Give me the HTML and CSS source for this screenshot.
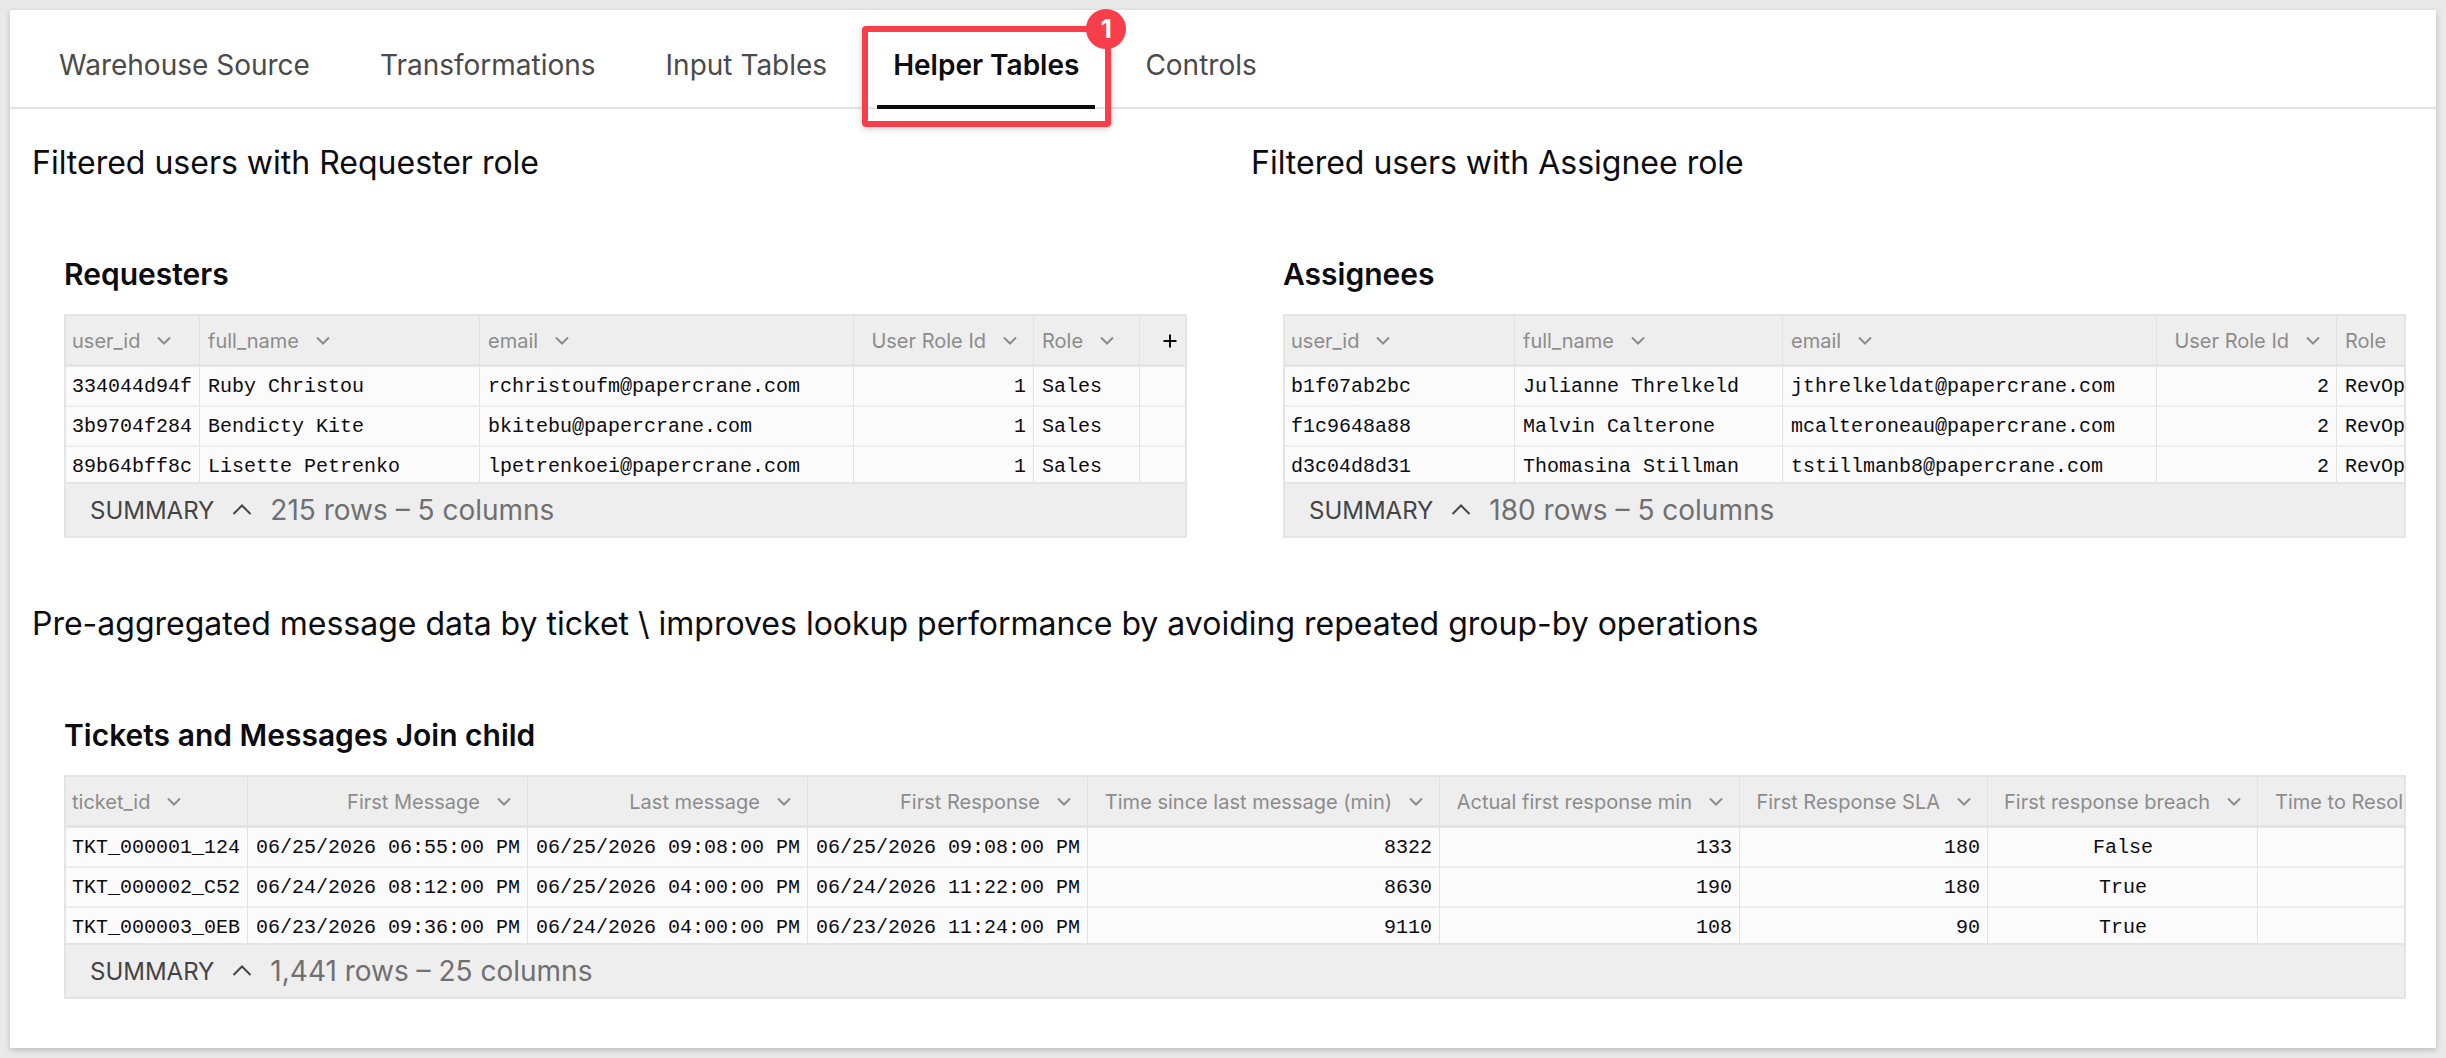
FILE: index.html
```html
<!DOCTYPE html>
<html lang="en">
<head>
    <meta charset="UTF-8">
    <meta name="viewport" content="width=device-width, initial-scale=1.0">
    <title>Helper Tables</title>
    <link rel="stylesheet" href="styles.css">
</head>
<body>
    <svg class="sprite" aria-hidden="true">
        <symbol id="chevron-down" viewBox="0 0 24 24">
            <path d="M6 8.5 L12 14.5 L18 8.5"/>
        </symbol>
        <symbol id="chevron-up" viewBox="0 0 24 24">
            <path d="M3.5 16 L12 7.5 L20.5 16"/>
        </symbol>
        <symbol id="plus" viewBox="0 0 24 24">
            <path d="M12 5.5 V18.5 M5.5 12 H18.5"/>
        </symbol>
    </svg>

    <main class="card">
        <nav class="tabs">
            <button type="button" class="tab">Warehouse Source</button>
            <button type="button" class="tab">Transformations</button>
            <button type="button" class="tab">Input Tables</button>
            <button type="button" class="tab active">Helper Tables<span class="callout"><span class="badge">1</span></span></button>
            <button type="button" class="tab">Controls</button>
        </nav>

        <div class="board">
            <section>
                <h2>Filtered users with Requester role</h2>
                <div class="widget">
                    <h3>Requesters</h3>
                    <div class="grid">
                        <div class="viewport">
                            <table>
                                <colgroup>
                                    <col class="w-id"><col class="w-date"><col class="w-email"><col class="w-role-id"><col class="w-role"><col>
                                </colgroup>
                                <thead>
                                    <tr>
                                        <th><button type="button">user_id<svg><use href="#chevron-down"/></svg></button></th>
                                        <th><button type="button">full_name<svg><use href="#chevron-down"/></svg></button></th>
                                        <th><button type="button">email<svg><use href="#chevron-down"/></svg></button></th>
                                        <th class="num"><button type="button">User Role Id<svg><use href="#chevron-down"/></svg></button></th>
                                        <th><button type="button">Role<svg><use href="#chevron-down"/></svg></button></th>
                                        <th class="add"><button type="button" aria-label="Add column"><svg><use href="#plus"/></svg></button></th>
                                    </tr>
                                </thead>
                                <tbody>
                                    <tr><td>334044d94f</td><td>Ruby Christou</td><td>rchristoufm@papercrane.com</td><td class="num">1</td><td>Sales</td><td></td></tr>
                                    <tr><td>3b9704f284</td><td>Bendicty Kite</td><td>bkitebu@papercrane.com</td><td class="num">1</td><td>Sales</td><td></td></tr>
                                    <tr><td>89b64bff8c</td><td>Lisette Petrenko</td><td>lpetrenkoei@papercrane.com</td><td class="num">1</td><td>Sales</td><td></td></tr>
                                </tbody>
                            </table>
                        </div>
                        <div class="footer">
                            <button type="button" class="summary">SUMMARY<svg><use href="#chevron-up"/></svg></button>
                            <span>215 rows – 5 columns</span>
                        </div>
                    </div>
                </div>
            </section>

            <section>
                <h2>Filtered users with Assignee role</h2>
                <div class="widget">
                    <h3>Assignees</h3>
                    <div class="grid">
                        <div class="viewport">
                            <table>
                                <colgroup>
                                    <col class="w-id-wide"><col class="w-name"><col class="w-email"><col class="w-role-id"><col class="w-role">
                                </colgroup>
                                <thead>
                                    <tr>
                                        <th><button type="button">user_id<svg><use href="#chevron-down"/></svg></button></th>
                                        <th><button type="button">full_name<svg><use href="#chevron-down"/></svg></button></th>
                                        <th><button type="button">email<svg><use href="#chevron-down"/></svg></button></th>
                                        <th class="num"><button type="button">User Role Id<svg><use href="#chevron-down"/></svg></button></th>
                                        <th><button type="button">Role</button></th>
                                    </tr>
                                </thead>
                                <tbody>
                                    <tr><td>b1f07ab2bc</td><td>Julianne Threlkeld</td><td>jthrelkeldat@papercrane.com</td><td class="num">2</td><td>RevOp</td></tr>
                                    <tr><td>f1c9648a88</td><td>Malvin Calterone</td><td>mcalteroneau@papercrane.com</td><td class="num">2</td><td>RevOp</td></tr>
                                    <tr><td>d3c04d8d31</td><td>Thomasina Stillman</td><td>tstillmanb8@papercrane.com</td><td class="num">2</td><td>RevOp</td></tr>
                                </tbody>
                            </table>
                        </div>
                        <div class="footer">
                            <button type="button" class="summary">SUMMARY<svg><use href="#chevron-up"/></svg></button>
                            <span>180 rows – 5 columns</span>
                        </div>
                    </div>
                </div>
            </section>

            <section class="full">
                <h2>Pre-aggregated message data by ticket \ improves lookup performance by avoiding repeated group-by operations</h2>
                <div class="widget">
                    <h3>Tickets and Messages Join child</h3>
                    <div class="grid">
                        <div class="viewport">
                            <table>
                                <colgroup>
                                    <col class="w-ticket"><col class="w-date"><col class="w-date"><col class="w-date"><col class="w-since"><col class="w-actual"><col class="w-sla"><col class="w-breach"><col class="w-actual">
                                </colgroup>
                                <thead>
                                    <tr>
                                        <th><button type="button">ticket_id<svg><use href="#chevron-down"/></svg></button></th>
                                        <th class="num"><button type="button">First Message<svg><use href="#chevron-down"/></svg></button></th>
                                        <th class="num"><button type="button">Last message<svg><use href="#chevron-down"/></svg></button></th>
                                        <th class="num"><button type="button">First Response<svg><use href="#chevron-down"/></svg></button></th>
                                        <th class="num"><button type="button">Time since last message (min)<svg><use href="#chevron-down"/></svg></button></th>
                                        <th class="num"><button type="button">Actual first response min<svg><use href="#chevron-down"/></svg></button></th>
                                        <th class="num"><button type="button">First Response SLA<svg><use href="#chevron-down"/></svg></button></th>
                                        <th class="num"><button type="button">First response breach<svg><use href="#chevron-down"/></svg></button></th>
                                        <th class="cut"><button type="button">Time to Resol</button></th>
                                    </tr>
                                </thead>
                                <tbody>
                                    <tr><td>TKT_000001_124</td><td>06/25/2026 06:55:00 PM</td><td>06/25/2026 09:08:00 PM</td><td>06/25/2026 09:08:00 PM</td><td class="num">8322</td><td class="num">133</td><td class="num">180</td><td class="flag">False</td><td></td></tr>
                                    <tr><td>TKT_000002_C52</td><td>06/24/2026 08:12:00 PM</td><td>06/25/2026 04:00:00 PM</td><td>06/24/2026 11:22:00 PM</td><td class="num">8630</td><td class="num">190</td><td class="num">180</td><td class="flag">True</td><td></td></tr>
                                    <tr><td>TKT_000003_0EB</td><td>06/23/2026 09:36:00 PM</td><td>06/24/2026 04:00:00 PM</td><td>06/23/2026 11:24:00 PM</td><td class="num">9110</td><td class="num">108</td><td class="num">90</td><td class="flag">True</td><td></td></tr>
                                </tbody>
                            </table>
                        </div>
                        <div class="footer">
                            <button type="button" class="summary">SUMMARY<svg><use href="#chevron-up"/></svg></button>
                            <span>1,441 rows – 25 columns</span>
                        </div>
                    </div>
                </div>
            </section>
        </div>
    </main>
</body>
</html>
```
FILE: styles.css
```css
* {
    box-sizing: border-box;
}
body {
    margin: 0;
    padding: 10px;
    background-color: #e9e9e9;
    color: #0c0c10;
    font-family: Inter, sans-serif;
}
button {
    padding: 0;
    border: none;
    background: none;
    color: inherit;
    font: inherit;
    cursor: pointer;
}
svg {
    width: 24px;
    height: 24px;
    flex: none;
    fill: none;
    stroke: currentColor;
    stroke-width: 2;
}
.sprite {
    display: none;
}
.card {
    background: white;
    padding-bottom: 49px;
    box-shadow: 0 2px 6px rgba(0, 0, 0, 0.2);
}

/* Tabs */
.tabs {
    display: flex;
    gap: 38px;
    height: 99px;
    padding: 0 33px;
    border-bottom: 2px solid #e4e4e4;
}
.tab {
    position: relative;
    height: 99px;
    padding: 14px 16px 0;
    border-bottom: 4px solid transparent;
    color: #4a4a4a;
    font-size: 28px;
    white-space: nowrap;
}
.tab.active {
    margin: 0 -4px;
    border-bottom-color: #0c0c10;
    color: #0c0c10;
    font-weight: 600;
}
.callout {
    position: absolute;
    top: 16px;
    left: -15px;
    right: -16px;
    bottom: -22px;
    border: 6px solid #f73e4a;
    border-radius: 4px;
    box-shadow: 0 2px 6px rgba(0, 0, 0, 0.2);
}
.badge {
    position: absolute;
    top: -23px;
    right: -21px;
    width: 40px;
    height: 40px;
    border-radius: 50%;
    background: #f73e4a;
    color: white;
    font-size: 26px;
    font-weight: 700;
    line-height: 40px;
    text-align: center;
}

/* Sections */
.board {
    display: grid;
    grid-template-columns: minmax(0, 1fr) minmax(0, 1fr);
    gap: 32px 34px;
    padding-left: 22px;
}
.full {
    grid-column: 1 / -1;
}
h2 {
    margin: 0;
    padding: 34px 0 71px;
    font-size: 32px;
    font-weight: 400;
    line-height: 40px;
}
.widget {
    padding: 0 30px 0 32px;
}
h3 {
    margin: 0 0 20px;
    font-size: 30px;
    font-weight: 600;
    line-height: 40px;
}

/* Data grids */
.grid {
    border: 2px solid #e4e4e4;
    background: #eeeeee;
}
.viewport {
    height: 166px;
    overflow: hidden;
}
table {
    width: 100%;
    table-layout: fixed;
    border-collapse: separate;
    border-spacing: 0;
}
th {
    height: 51px;
    padding: 0 11px 0 8px;
    border-right: 1px solid #e2e2e2;
    border-bottom: 3px solid #e4e4e4;
    color: #8c8c8c;
    font-size: 20px;
    font-weight: 400;
    text-align: left;
}
th button {
    display: inline-flex;
    align-items: center;
    gap: 12px;
    vertical-align: middle;
    white-space: nowrap;
}
td {
    height: 40px;
    padding: 0 7px 0 8px;
    border-right: 1px solid #e2e2e2;
    border-bottom: 2px solid #eeeeee;
    background: #fbfbfb;
    font-family: "Liberation Mono", monospace;
    font-size: 20px;
    white-space: nowrap;
}
th:first-child,
td:first-child {
    padding-left: 6px;
}
th:last-child,
td:last-child {
    border-right: none;
}
.num {
    text-align: right;
}
.flag {
    text-align: center;
}
th.add {
    padding: 0 3px 0 0;
    color: #0c0c10;
    text-align: right;
}
th.cut {
    padding-left: 17px;
}
.w-id { width: 134px; }
.w-id-wide { width: 230px; }
.w-name { width: 268px; }
.w-email { width: 374px; }
.w-role-id { width: 180px; }
.w-role { width: 106px; }
.w-ticket { width: 182px; }
.w-date { width: 280px; }
.w-since { width: 352px; }
.w-actual { width: 300px; }
.w-sla { width: 248px; }
.w-breach { width: 270px; }

.footer {
    display: flex;
    align-items: center;
    gap: 16px;
    height: 54px;
    padding-left: 24px;
    border-top: 2px solid #e4e4e4;
    color: #707070;
    font-size: 28px;
}
.summary {
    display: flex;
    align-items: center;
    gap: 16px;
    color: #444444;
    font-size: 24px;
}
```
